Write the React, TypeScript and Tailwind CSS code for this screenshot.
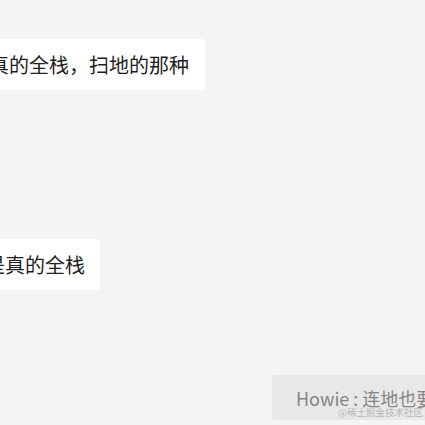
import React from "react";

export default function App() {
  const font = { fontFamily: '"Noto Sans CJK SC", "Noto Sans", sans-serif' };
  return (
    <div
      className="relative w-[425px] h-[425px] overflow-hidden bg-[#f4f4f4] flex flex-col"
      style={font}
    >
      <div className="mt-[39px] ml-[-86px] self-start h-[51px] flex items-center pl-[15px] pr-[16px] bg-white rounded-[3px] text-[20px] leading-[27px] text-[#1f1f1f] whitespace-nowrap">
        这才是真的全栈，扫地的那种
      </div>
      <div className="mt-[149px] ml-[-70px] self-start h-[51px] flex items-center pl-[15px] pr-[15px] bg-white rounded-[3px] text-[20px] leading-[27px] text-[#1f1f1f] whitespace-nowrap">
        这才是真的全栈
      </div>
      <div className="mt-[85px] ml-[272px] w-[300px] h-[45px] flex items-center pl-[24px] bg-[#e8e8e8] rounded-l-[3px] text-[18px] leading-[24px] text-[#858585] whitespace-nowrap">
        Howie : 连地也要扫
      </div>
      <div className="absolute right-[2px] top-[406px] text-[9.5px] leading-[13px] text-[#b8b8b8] whitespace-nowrap">
        @稀土掘金技术社区
      </div>
    </div>
  );
}
